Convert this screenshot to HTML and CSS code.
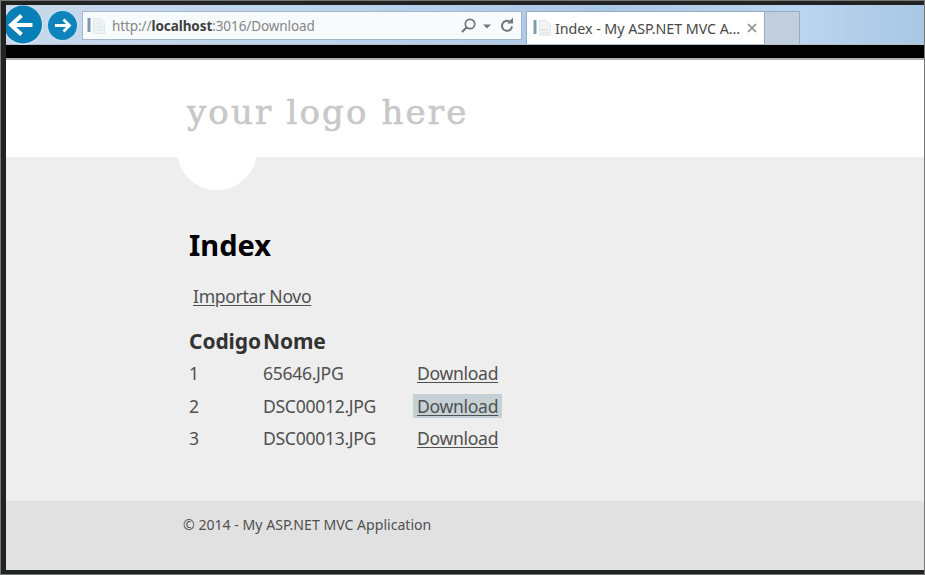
FILE: index.html
```
<!DOCTYPE html>
<html lang="pt">
<head>
<meta charset="utf-8">
<title>Index - My ASP.NET MVC Application</title>
<link rel="stylesheet" href="styles.css">
</head>
<body>
<div class="window">
  <div class="chrome">
    <svg class="nav" width="75" height="40" viewBox="0 0 75 40">
      <circle cx="17" cy="20" r="20" fill="#d5e6f3"/>
      <circle cx="17" cy="19.500" r="19" fill="#087fb7"/>
      <path d="M26.500 20H5M15.500 10.500L5 20L15.500 29.500" fill="none" stroke="#fff" stroke-width="4"/>
      <circle cx="56.500" cy="20.500" r="15.500" fill="#c9e2f2"/>
      <circle cx="56.500" cy="20.500" r="14.500" fill="#0d84bd"/>
      <path d="M49 20.500H62M57.500 14.500L63.500 20.500L57.500 26.500" fill="none" stroke="#fff" stroke-width="2.800"/>
    </svg>
    <div class="address">
      <svg class="favicon" width="19" height="18" viewBox="0 0 19 18"><path d="M2 1V15" stroke="#7d99ab" stroke-width="3"/><path d="M6.500 1.500H13L17.500 6V16.500H6.500Z" fill="#eef3f5" stroke="#e0e7eb"/><path d="M9 6H14M8 10H16M8 13H16" stroke="#dce7ec"/></svg>
      <span class="url">http://<b>localhost</b>:3016/Download</span>
      <svg class="tools" width="56" height="20" viewBox="0 0 56 20" fill="none" stroke="#747474">
        <circle cx="11" cy="8" r="4.700" stroke-width="1.700"/><path d="M7.500 11.500L3 16" stroke-width="2.200"/>
        <path d="M24 8.500H32L28 12.500Z" fill="#777" stroke="none"/>
        <path d="M51 5.800A5 5 0 1 0 53 10.500" stroke-width="2"/><path d="M48 7.500H54V1.500Z" fill="#777" stroke="none"/>
      </svg>
    </div>
    <div class="tab">
      <svg class="favicon" width="19" height="18" viewBox="0 0 19 18"><path d="M2 1V15" stroke="#7d9fad" stroke-width="3"/><path d="M6.500 1.500H13L17.500 6V16.500H6.500Z" fill="#f1f3f5" stroke="#e2e8ec"/><path d="M8 11H16" stroke="#e2d5d7"/><path d="M8 14H16" stroke="#cfe0e9"/></svg>
      <span class="tab-title">Index - My ASP.NET MVC A...</span>
      <svg class="close" width="10" height="10" viewBox="0 0 10 10"><path d="M1 1L9 9M9 1L1 9" stroke="#8b8b8b" stroke-width="1.700"/></svg>
    </div>
    <div class="new-tab"></div>
  </div>
  <div class="strip"></div>
  <header><span class="logo">your logo here</span></header>
  <main>
    <h1>Index</h1>
    <p><a class="import">Importar Novo</a></p>
    <table>
      <tr><th class="id">Codigo</th><th class="name">Nome</th><th></th></tr>
      <tr><td>1</td><td>65646.JPG</td><td><a>Download</a></td></tr>
      <tr><td>2</td><td>DSC00012.JPG</td><td><a class="active">Download</a></td></tr>
      <tr><td>3</td><td>DSC00013.JPG</td><td><a>Download</a></td></tr>
    </table>
  </main>
  <footer><span class="copyright">© 2014 - My ASP.NET MVC Application</span></footer>
</div>
</body>
</html>
```
FILE: styles.css
```
* { box-sizing: border-box; }
body {
  margin: 0;
  width: 925px;
  height: 575px;
  overflow: hidden;
  padding: 5px 1px 5px 6px;
  background: #212323;
  box-shadow: inset 0 0 0 1px #777875;
  font-family: "Noto Sans", sans-serif;
  color: #505050;
}
.window { height: 565px; display: flex; flex-direction: column; background: #fff; white-space: nowrap; }
.chrome {
  height: 40px;
  display: flex;
  flex: none;
  background: linear-gradient(90deg, #c9d8ea, #bcd5ef 35%, #a9c7e6 65%, #b9d5f0 87%, #a9c6e2);
  border-bottom: 1px solid #afbdca;
}
.nav { flex: none; }
.address {
  width: 440px;
  height: 29px;
  margin: 6px 0 0 1px;
  padding-left: 4px;
  display: flex;
  align-items: center;
  background: #f8fbfd;
  border: 1px solid #a6b6c7;
}
.favicon { flex: none; }
.url { margin-left: 6px; font-size: 13.5px; color: #858585; letter-spacing: -.08px; }
.url b { color: #404040; }
.tools { margin-left: auto; margin-right: 6px; }
.tab {
  width: 239px;
  height: 33px;
  margin: 6px 0 0 4px;
  padding-left: 6px;
  display: flex;
  align-items: center;
  background: #fff;
  border: 1px solid #99abc0;
  border-bottom: 0;
}
.tab-title { width: 187px; margin-left: 3px; font-size: 14.3px; letter-spacing: -.06px; color: #484848; }
.close { margin-left: 5px; }
.new-tab { width: 35px; height: 33px; margin-top: 6px; background: #c0cedd; border: 1px solid #96acc4; border-width: 1px 1px 0 0; }
.strip { height: 15px; flex: none; background: #000; border-bottom: 2px solid #b2b2b2; }
header { height: 97px; flex: none; padding: 28px 0 0 181px; background: #fff; }
.logo { display: block; font-family: "DejaVu Serif", serif; font-size: 34px; line-height: 48px; letter-spacing: 2.15px; color: #c8c8c8; -webkit-text-stroke: .6px #c8c8c8; }
main {
  height: 344px;
  flex: none;
  padding: 68px 0 0 183px;
  background: radial-gradient(circle at 211px -7px, #fff 39.5px, transparent 40.5px), #eee;
}
h1 { margin: 0; font-size: 29px; line-height: 40px; color: #000; }
p { margin: 20px 0 0 4px; font-size: 17.6px; line-height: 22px; letter-spacing: -.32px; }
a { text-decoration: underline; text-underline-offset: 2px; }
table { margin-top: 19px; border-spacing: 0; font-size: 17.6px; letter-spacing: -.32px; }
th { padding: 0; text-align: left; font-size: 21px; line-height: 30px; letter-spacing: -.1px; color: #333; }
td { padding: 2px 0 0; height: 32.5px; line-height: 24px; }
.id { width: 74px; }
.name { width: 150px; }
td a { display: inline-block; padding: 0 4px; }
.active { background: #c5d1d5; }
footer { flex: 1; padding: 13px 0 0 177px; background: #e1e1e1; }
.copyright { display: block; font-size: 14.1px; line-height: 22px; }
```
